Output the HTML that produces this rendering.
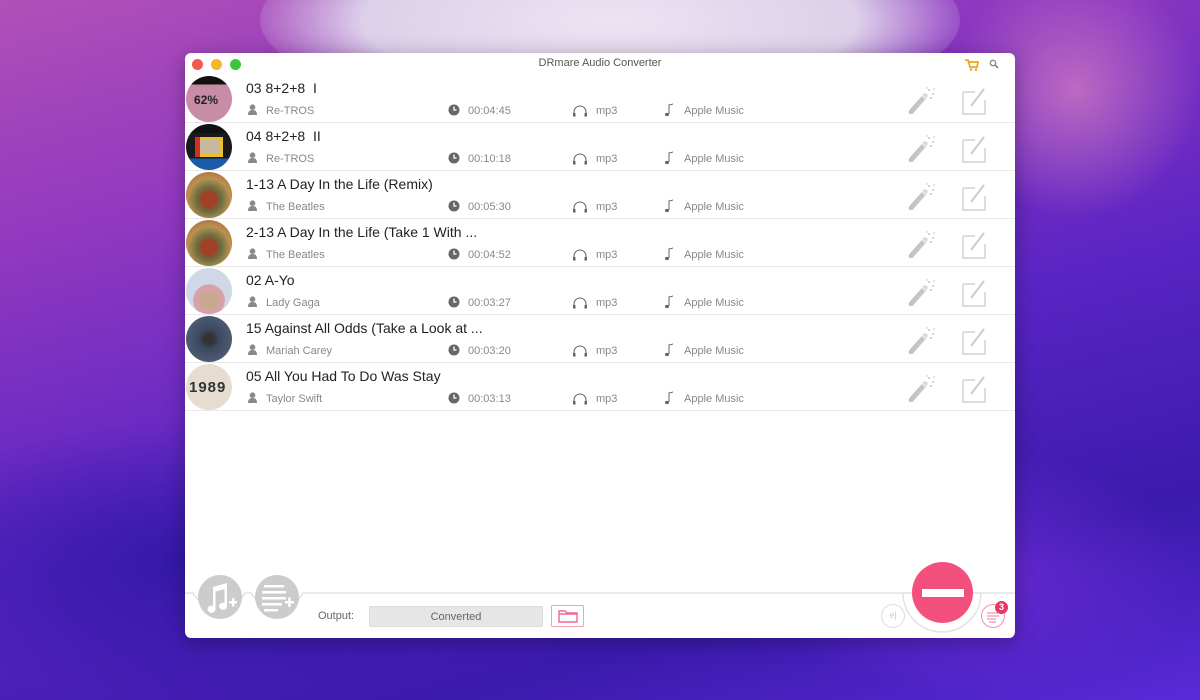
<!DOCTYPE html>
<html><head><meta charset="utf-8"><style>
*{margin:0;padding:0;box-sizing:border-box}
html,body{width:1200px;height:700px;overflow:hidden}
#wrap{position:absolute;left:0;top:0;width:1200px;height:700px;overflow:hidden;font-family:"Liberation Sans",sans-serif;
background:linear-gradient(165deg,#b050b8 0%,#9038c0 25%,#5a24c4 55%,#3a1aac 80%,#5a2ad8 100%);}
.bg1{position:absolute;left:260px;top:-80px;width:700px;height:200px;border-radius:50%;background:radial-gradient(ellipse,#ece4f2 0%,#dcd0ea 50%,rgba(210,190,230,0) 75%)}
.bg2{position:absolute;left:950px;top:-40px;width:250px;height:260px;border-radius:50%;background:radial-gradient(ellipse,rgba(215,130,195,.7) 0%,rgba(200,120,190,0) 70%)}
.bg3{position:absolute;left:-150px;top:420px;width:700px;height:280px;border-radius:50%;background:radial-gradient(ellipse,rgba(42,22,160,.8) 0%,rgba(40,20,150,0) 70%)}
.bg4{position:absolute;left:750px;top:450px;width:450px;height:250px;border-radius:50%;background:radial-gradient(ellipse,rgba(122,46,224,.7) 0%,rgba(120,50,220,0) 70%)}
.win{position:absolute;left:185px;top:53px;width:830px;height:585px;background:#fff;border-radius:6px;overflow:hidden;box-shadow:0 4px 20px rgba(0,0,0,.3)}
.tb{height:22px;position:relative}
.dot{position:absolute;top:6px;width:11px;height:11px;border-radius:50%}
.ttl{position:absolute;left:0;right:0;top:4px;text-align:center;font-size:11px;color:#555}
.row{position:absolute;left:0;width:830px;height:48px;border-bottom:1.5px solid #e8e8e8}
.av{position:absolute;left:1px;top:1px;width:46px;height:46px;border-radius:50%;overflow:hidden}
.t{position:absolute;left:61px;top:5px;font-size:14px;color:#222}
</style></head><body><div id="wrap">
<div class="bg1"></div><div class="bg2"></div><div class="bg3"></div><div class="bg4"></div>
<div class="win" id="win">
<div class="tb">
<div class="dot" style="left:7px;background:#f05a50"></div>
<div class="dot" style="left:26px;background:#f5b62a"></div>
<div class="dot" style="left:45px;background:#3ec53e"></div>
<div class="ttl">DRmare Audio Converter</div>
<svg style="position:absolute;left:780px;top:6px" width="14" height="12"><path d="M0 1h3l2 7h7l1-5H4" fill="none" stroke="#f0a818" stroke-width="1.8"/><circle cx="6" cy="10.5" r="1.3" fill="#f0a818"/><circle cx="11" cy="10.5" r="1.3" fill="#f0a818"/></svg>
<svg style="position:absolute;left:804px;top:6px" width="10" height="10"><circle cx="4" cy="4" r="2.7" fill="none" stroke="#888" stroke-width="1.4"/><path d="M6 6l3 3" stroke="#888" stroke-width="1.8"/></svg>
</div>

<div class="row" style="top:22px"><div class="av" style="background:linear-gradient(180deg,#111 0 18%,#c98aa8 18%,#c68fa6 100%)"><div style="position:absolute;left:8px;top:17px;font-size:12px;font-weight:bold;color:#222">62%</div></div>
<div class="t">03 8+2+8&nbsp; I</div></div>
<div class="row" style="top:70px"><div class="av" style="background:linear-gradient(180deg,#111 0 20%,#1a1a1a 20% 75%,#1a5aa8 75%)"><div style="position:absolute;left:9px;top:13px;width:28px;height:20px;background:#e8c030"></div><div style="position:absolute;left:13px;top:16px;width:20px;height:14px;background:#c8b8a0"></div><div style="position:absolute;left:9px;top:13px;width:5px;height:20px;background:#d03020"></div></div>
<div class="t">04 8+2+8&nbsp; II</div></div>
<div class="row" style="top:118px"><div class="av" style="background:radial-gradient(circle at 50% 60%,#a04028 0 20%,#6a7040 35%,#c09050 60%,#8a5a30 100%)"></div>
<div class="t">1-13 A Day In the Life (Remix)</div></div>
<div class="row" style="top:166px"><div class="av" style="background:radial-gradient(circle at 50% 60%,#a04028 0 20%,#6a7040 35%,#c09050 60%,#8a5a30 100%)"></div>
<div class="t">2-13 A Day In the Life (Take 1 With ...</div></div>
<div class="row" style="top:214px"><div class="av" style="background:radial-gradient(circle at 50% 70%,#c8a890 0 25%,#d8a0a8 25% 40%,#cfd8e4 40%)"></div>
<div class="t">02 A-Yo</div></div>
<div class="row" style="top:262px"><div class="av" style="background:radial-gradient(circle at 50% 50%,#333 0 15%,#3a4860 30%,#5a6a80 100%)"></div>
<div class="t">15 Against All Odds (Take a Look at ...</div></div>
<div class="row" style="top:310px"><div class="av" style="background:#e6ddd0"><div style="position:absolute;left:3px;top:15px;font-size:15px;font-weight:bold;color:#333;letter-spacing:1px">1989</div></div>
<div class="t">05 All You Had To Do Was Stay</div></div>

<svg style="position:absolute;left:0;top:505px" width="830" height="80">
<path d="M0 35 H8 A30 30 0 0 0 60 35 H66 A30 30 0 0 0 118 35 H830" fill="none" stroke="#e2e2e2" stroke-width="1.5"/>
<path d="M718 35 A38 38 0 0 0 796 35" fill="none" stroke="#e2e2e2" stroke-width="1.5"/>
<circle cx="35" cy="39" r="22" fill="#ccc"/>
<circle cx="92" cy="39" r="22" fill="#ccc"/>
<g fill="#fff" transform="translate(0,2)"><rect x="79" y="25" width="20" height="2.5"/><rect x="77" y="31" width="24" height="2.5"/><rect x="77" y="37" width="24" height="2.5"/><rect x="77" y="43" width="20" height="2.5"/><rect x="79" y="49" width="14" height="2.5"/>
<path d="M100 41h9v2.5h-9zM103.2 37.5h2.5v9.5h-2.5z"/>
<path d="M28 27 L42 23 V46 A4 3.5 0 1 1 39.5 43 V29 L30.5 31.5 V49 A4 3.5 0 1 1 28 46 Z"/>
<path d="M44 41h8v2.5h-8zM46.8 38h2.5v8.5h-2.5z"/></g>
</svg>
<div style="position:absolute;left:133px;top:557px;font-size:11px;color:#666">Output:</div>
<div style="position:absolute;left:184px;top:553px;width:174px;height:21px;background:#e6e6e6;border:1px solid #ddd;border-radius:2px;text-align:center;font-size:11px;color:#666;line-height:20px">Converted</div>
<div style="position:absolute;left:366px;top:552px;width:33px;height:22px;border:1.5px solid #f4a0b8;border-radius:2px"></div>
<svg style="position:absolute;left:373px;top:556px" width="20" height="14"><path d="M1 2h6l2 2h10v9H1z M1 5h18" fill="none" stroke="#f06890" stroke-width="1.4"/></svg>
<div style="position:absolute;left:727px;top:509px;width:61px;height:61px;border-radius:50%;background:#f4507e"></div>
<div style="position:absolute;left:737px;top:536px;width:42px;height:8px;background:#fff"></div>
<div style="position:absolute;left:696px;top:551px;width:24px;height:24px;border-radius:50%;border:1.5px solid #ddd;font-size:9px;color:#ccc;text-align:center;line-height:21px">e|</div>
<div style="position:absolute;left:796px;top:551px;width:24px;height:24px;border-radius:50%;border:1.5px solid #f490b0"></div>
<svg style="position:absolute;left:800px;top:558px" width="16" height="12"><path d="M2 2h11M2 5h12M2 8h9M4 11h7" stroke="#f490b0" stroke-width="1.2"/></svg>
<div style="position:absolute;left:810px;top:548px;width:13px;height:13px;border-radius:50%;background:#e8386a;color:#fff;font-size:9px;font-weight:bold;text-align:center;line-height:13px">3</div>
</div>
</div>
<script>
var d=[["Re-TROS","00:04:45"],["Re-TROS","00:10:18"],["The Beatles","00:05:30"],["The Beatles","00:04:52"],["Lady Gaga","00:03:27"],["Mariah Carey","00:03:20"],["Taylor Swift","00:03:13"]];
var h="";
d.forEach(function(r,i){var y=22+48*i;
h+='<div style="position:absolute;left:0;top:'+y+'px;width:830px;height:48px">'+
'<svg style="position:absolute;left:62px;top:29px" width="11" height="11"><circle cx="5.5" cy="3.2" r="2.8" fill="#888"/><path d="M1 11c0-4 2-5 4.5-5s4.5 1 4.5 5z" fill="#888"/></svg>'+
'<div style="position:absolute;left:81px;top:30px;font-size:11px;color:#888">'+r[0]+'</div>'+
'<svg style="position:absolute;left:263px;top:29px" width="12" height="12"><circle cx="6" cy="6" r="5.5" fill="#666"/><path d="M6 2.5V6h2.5" stroke="#fff" stroke-width="1.3" fill="none"/></svg>'+
'<div style="position:absolute;left:283px;top:30px;font-size:11px;color:#888">'+r[1]+'</div>'+
'<svg style="position:absolute;left:387px;top:29px" width="16" height="13"><path d="M2 11V8a6 6 0 0 1 12 0v3" fill="none" stroke="#666" stroke-width="1.1"/><rect x="1" y="9" width="2.5" height="3.5" fill="#666"/><rect x="12.5" y="9" width="2.5" height="3.5" fill="#666"/></svg>'+
'<div style="position:absolute;left:411px;top:30px;font-size:11px;color:#888">mp3</div>'+
'<svg style="position:absolute;left:478px;top:28px" width="12" height="14"><path d="M6 11V2l4-1" fill="none" stroke="#666" stroke-width="1"/><ellipse cx="4" cy="11.5" rx="2" ry="1.6" fill="#666"/></svg>'+
'<div style="position:absolute;left:499px;top:30px;font-size:11px;color:#888">Apple Music</div>'+
'<svg style="position:absolute;left:722px;top:11px" width="30" height="28"><path d="M4 26 L18 10" stroke="#c4c4c4" stroke-width="5" stroke-linecap="round"/><path d="M16 12 L19 9" stroke="#e0e0e0" stroke-width="5"/><g fill="#c4c4c4"><circle cx="22" cy="4" r="1"/><circle cx="26" cy="8" r="1"/><circle cx="24" cy="12" r="1"/><circle cx="20" cy="2" r=".8"/><circle cx="27" cy="3" r=".8"/></g></svg>'+
'<svg style="position:absolute;left:775px;top:11px" width="30" height="30"><path d="M3 6h12 M3 6v22h22V14" fill="none" stroke="#ddd" stroke-width="2"/><path d="M11 20L24 3" stroke="#ccc" stroke-width="2"/></svg>'+
'</div>';});
document.getElementById("win").insertAdjacentHTML("beforeend",h);
</script>
</body></html>
